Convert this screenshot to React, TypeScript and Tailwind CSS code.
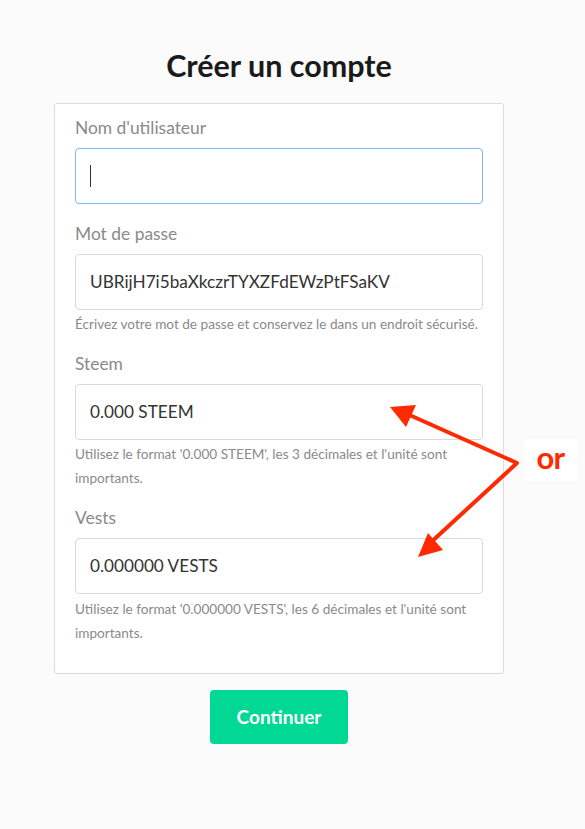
import { ReactNode } from 'react';

interface FieldProps {
  label: string;
  value?: string;
  focused?: boolean;
  help?: ReactNode;
  tight?: boolean;
}

function Field({ label, value, focused, help, tight }: FieldProps) {
  return (
    <div className="mb-[18px]">
      <label className="block text-[17.4px] leading-6 text-[#8a8a8a] mb-[8px]">{label}</label>
      <div
        className={
          focused
            ? 'h-[56px] rounded-[4px] border border-[#7cb9f4] bg-white flex items-center px-[14px]'
            : 'h-[56px] rounded-[4px] border border-[#d9d9d9] bg-white flex items-center px-[14px]'
        }
      >
        {focused ? (
          <span className="block w-px h-[22px] bg-[#333]" />
        ) : (
          <span className="text-[17.2px] text-[#333]">{value}</span>
        )}
      </div>
      {help && (
        <p className={tight ? 'mt-[2px] -mb-[2px] text-[13.6px] leading-6 text-[#8a8a8a]' : 'mt-[3px] -mb-[2px] text-[13.6px] leading-6 text-[#8a8a8a]'}>
          {help}
        </p>
      )}
    </div>
  );
}

export default function App() {
  return (
    <div className="relative min-h-[829px] w-[585px] bg-[#fbfbfb] pt-[44px]" style={{ fontFamily: 'Lato, "Noto Sans", sans-serif' }}>
      <div className="w-[558px]">
        <h1 className="text-center text-[30.5px] leading-[42px] font-bold text-[#1a1a1a] mb-[17px]">Créer un compte</h1>
        <div className="mx-auto w-[450px] bg-white border border-[#dcdcdc] rounded-[3px] pt-[12px] pb-[12px] px-[20px]">
          <Field label="Nom d'utilisateur" focused />
          <Field
            label="Mot de passe"
            value="UBRijH7i5baXkczrTYXZFdEWzPtFSaKV"
            help="Écrivez votre mot de passe et conservez le dans un endroit sécurisé."
            tight
          />
          <Field
            label="Steem"
            value="0.000 STEEM"
            help="Utilisez le format '0.000 STEEM', les 3 décimales et l'unité sont importants."
            tight
          />
          <Field
            label="Vests"
            value="0.000000 VESTS"
            help="Utilisez le format '0.000000 VESTS', les 6 décimales et l'unité sont importants."
          />
        </div>
        <div className="flex justify-center mt-[16px]">
          <button className="w-[138px] h-[54px] rounded-[4px] bg-[#00d893] text-white font-bold text-[19px]">Continuer</button>
        </div>
      </div>

      {/* annotation arrows */}
      <svg className="absolute left-0 top-0 pointer-events-none" width="585" height="829">
        <g stroke="#ff2a00" strokeWidth="4" strokeLinecap="round" strokeLinejoin="round" fill="none">
          <polyline points="405,413 517,463 428,545" />
        </g>
        <polygon points="390,407 416,405 406,427" fill="#ff2a00" />
        <polygon points="418,557 428,533 443,550" fill="#ff2a00" />
      </svg>
      <div className="absolute left-[524px] top-[439px] w-[53px] h-[42px] bg-white flex items-center justify-center">
        <span className="text-[31px] font-bold text-[#ff2a00] leading-none -mt-[6px] tracking-tight">or</span>
      </div>
    </div>
  );
}
